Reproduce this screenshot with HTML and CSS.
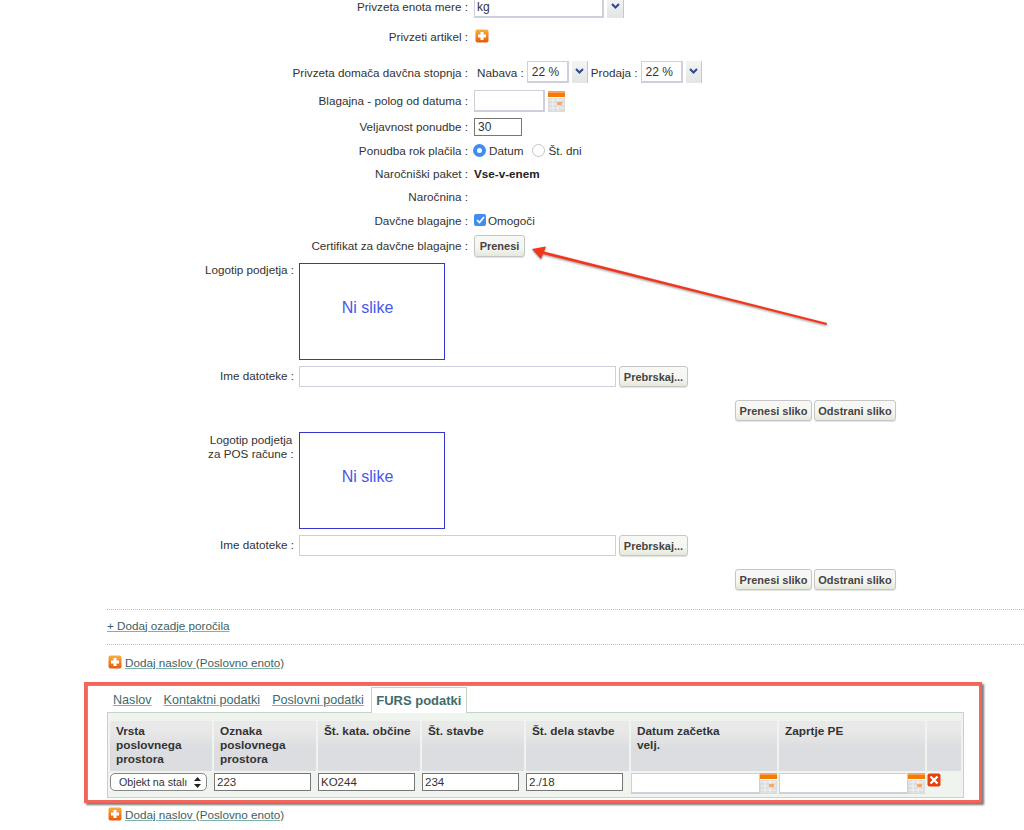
FILE: index.html
```html
<!DOCTYPE html>
<html lang="en">
<head>
    <meta charset="UTF-8">
    <title>Nastavitve podjetja</title>
    <link rel="stylesheet" href="styles.css">
</head>
<body>

<svg width="0" height="0" class="icon-defs">
    <defs>
        <linearGradient id="orange-fill" x1="0" y1="0" x2="0" y2="1">
            <stop offset="0" stop-color="#fbb03b"/>
            <stop offset="1" stop-color="#e8590c"/>
        </linearGradient>
        <symbol id="icon-add" viewBox="0 0 14 14">
            <rect x="0.5" y="0.5" width="13" height="13" rx="2" fill="url(#orange-fill)"/>
            <path d="M5.5 3h3v2.5H11v3H8.500V11h-3V8.500H3v-3h2.500z" fill="#fff"/>
        </symbol>
        <symbol id="icon-cal" viewBox="0 0 17 21" preserveAspectRatio="none">
            <rect width="17" height="21" fill="#dcdcdc"/>
            <rect width="17" height="2" fill="#f7a35c"/>
            <rect y="2" width="17" height="4" fill="#f57c00"/>
            <rect y="6" width="17" height="1" fill="#fff"/>
            <path d="M1 9h15M1 13h15M1 17h15M5 7v13M10 7v13" stroke="#f3f3f3" stroke-width="1"/>
            <rect x="9" y="11" width="5" height="3" fill="#f8a765"/>
        </symbol>
    </defs>
</svg>

<div id="company-form">
    <div class="row row-first">
        <label class="row-label">Privzeta enota mere :</label>
        <div class="row-value">
            <input type="text" class="field field-unit" value="kg">
            <span class="drop-btn"><svg width="9" height="6" viewBox="0 0 9 6"><path d="M1 1l3.500 3.500L8 1" fill="none" stroke="#2b4a8b" stroke-width="2"/></svg></span>
        </div>
    </div>
    <div class="row row-article">
        <label class="row-label label-up">Privzeti artikel :</label>
        <div class="row-value"><svg class="add-icon add-icon-raised"><use href="#icon-add"/></svg></div>
    </div>
    <div class="row row-tax">
        <label class="row-label">Privzeta domača davčna stopnja :</label>
        <div class="row-value">
            <span class="tax-label">Nabava :</span>
            <input type="text" class="field field-tax" value="22 %">
            <span class="drop-btn"><svg width="9" height="6" viewBox="0 0 9 6"><path d="M1 1l3.500 3.500L8 1" fill="none" stroke="#2b4a8b" stroke-width="2"/></svg></span>
            <span class="tax-label tax-label-second">Prodaja :</span>
            <input type="text" class="field field-tax" value="22 %">
            <span class="drop-btn"><svg width="9" height="6" viewBox="0 0 9 6"><path d="M1 1l3.500 3.500L8 1" fill="none" stroke="#2b4a8b" stroke-width="2"/></svg></span>
        </div>
    </div>
    <div class="row row-cash">
        <label class="row-label label-up">Blagajna - polog od datuma :</label>
        <div class="row-value">
            <input type="text" class="field field-date">
            <svg class="cal-icon"><use href="#icon-cal"/></svg>
        </div>
    </div>
    <div class="row row-valid">
        <label class="row-label">Veljavnost ponudbe :</label>
        <div class="row-value"><input type="text" class="field field-days" value="30"></div>
    </div>
    <div class="row">
        <label class="row-label">Ponudba rok plačila :</label>
        <div class="row-value">
            <span class="radio radio-on"></span><span class="opt-text">Datum</span>
            <span class="radio"></span><span class="opt-text">Št. dni</span>
        </div>
    </div>
    <div class="row row-up">
        <label class="row-label">Naročniški paket :</label>
        <div class="row-value"><b class="package">Vse-v-enem</b></div>
    </div>
    <div class="row row-up">
        <label class="row-label">Naročnina :</label>
        <div class="row-value"></div>
    </div>
    <div class="row row-up">
        <label class="row-label">Davčne blagajne :</label>
        <div class="row-value">
            <span class="check"><svg width="9" height="8" viewBox="0 0 9 8"><path d="M1 4l2.500 2.500L8 1" fill="none" stroke="#fff" stroke-width="1.6"/></svg></span>
            <span class="opt-text">Omogoči</span>
        </div>
    </div>
    <div class="row row-cert">
        <label class="row-label label-up">Certifikat za davčne blagajne :</label>
        <div class="row-value"><button class="btn btn-upload">Prenesi</button></div>
    </div>

    <div class="logo-row">
        <label class="logo-label">Logotip podjetja :</label>
        <div class="logo-box">Ni slike</div>
    </div>
    <div class="file-row">
        <label class="logo-label label-up">Ime datoteke :</label>
        <input type="text" class="field field-file">
        <button class="btn btn-browse">Prebrskaj...</button>
    </div>
    <div class="logo-actions">
        <button class="btn btn-send">Prenesi sliko</button>
        <button class="btn btn-remove">Odstrani sliko</button>
    </div>

    <div class="logo-row logo-row-pos">
        <label class="logo-label logo-label-center">Logotip podjetja<br>za POS račune :</label>
        <div class="logo-box">Ni slike</div>
    </div>
    <div class="file-row">
        <label class="logo-label label-up">Ime datoteke :</label>
        <input type="text" class="field field-file">
        <button class="btn btn-browse">Prebrskaj...</button>
    </div>
    <div class="logo-actions">
        <button class="btn btn-send">Prenesi sliko</button>
        <button class="btn btn-remove">Odstrani sliko</button>
    </div>
</div>

<div id="report-bg">
    <a href="#" class="link">+ Dodaj ozadje poročila</a>
</div>

<div class="add-address">
    <svg class="add-icon"><use href="#icon-add"/></svg>
    <a href="#" class="link">Dodaj naslov (Poslovno enoto)</a>
</div>

<!-- Highlighted address card -->
<div id="address-card">
    <div class="tabs">
        <a href="#" class="tab">Naslov</a>
        <a href="#" class="tab">Kontaktni podatki</a>
        <a href="#" class="tab">Poslovni podatki</a>
        <span class="tab-active">FURS podatki</span>
    </div>
    <div class="tab-panel">
        <table id="furs-table">
            <thead>
                <tr>
                    <th class="col-std">Vrsta poslovnega prostora</th>
                    <th class="col-std">Oznaka poslovnega prostora</th>
                    <th class="col-std">Št. kata. občine</th>
                    <th class="col-std">Št. stavbe</th>
                    <th class="col-wide">Št. dela stavbe</th>
                    <th class="col-date">Datum začetka<br>velj.</th>
                    <th class="col-date2">Zaprtje PE</th>
                    <th class="col-del"></th>
                </tr>
            </thead>
            <tbody>
                <tr>
                    <td><span class="pill-select">Objekt na stalı <svg width="7" height="11" viewBox="0 0 7 11"><path d="M3.500 0L7 4H0zM3.500 11L0 7h7z" fill="#222"/></svg></span></td>
                    <td><input type="text" class="cell-input" value="223"></td>
                    <td><input type="text" class="cell-input" value="KO244"></td>
                    <td><input type="text" class="cell-input" value="234"></td>
                    <td><input type="text" class="cell-input" value="2./18"></td>
                    <td><div class="date-cell"><input type="text" class="cell-date"><svg class="cal-icon-small"><use href="#icon-cal"/></svg></div></td>
                    <td><div class="date-cell"><input type="text" class="cell-date"><svg class="cal-icon-small"><use href="#icon-cal"/></svg></div></td>
                    <td>
                        <svg class="del-icon" viewBox="0 0 14 14">
                            <rect x="0.5" y="0.5" width="13" height="13" rx="2" fill="#ea3d0c"/>
                            <path d="M3.500 3.500l7 7M10.500 3.500l-7 7" stroke="#fff" stroke-width="2.400"/>
                        </svg>
                    </td>
                </tr>
            </tbody>
        </table>
    </div>
</div>

<div class="add-address add-address-bottom">
    <svg class="add-icon"><use href="#icon-add"/></svg>
    <a href="#" class="link">Dodaj naslov (Poslovno enoto)</a>
</div>

<!-- Annotation arrow over the form -->
<svg id="arrow" width="310" height="90" viewBox="0 0 310 90">
    <path d="M4 5L18 2.500L16 7.500L299 79L298.500 81L15 10L13 15z" fill="#f5351a"/>
</svg>

</body>
</html>
```

FILE: styles.css
```css
/* Page */
body {
    font-family: 'Liberation Sans', Arial, sans-serif;
    font-size: 11.7px;
    color: #333;
    background-color: #fff;
    margin: 0;
    width: 1024px;
    height: 830px;
    overflow: hidden;
    position: relative;
}

.icon-defs {
    position: absolute;
}

/* Form rows */
.row {
    display: flex;
    align-items: center;
    height: 23.5px;
}

.row-up {
    box-sizing: border-box;
    padding-bottom: 2px;
}

.label-up {
    padding-bottom: 2px;
}

.row-first {
    height: 18px;
    align-items: flex-end;
    overflow: hidden;
}

.row-first .row-label {
    padding-bottom: 5px;
}

.row-article {
    height: 38px;
}

.row-tax {
    height: 32px;
}

.row-cash {
    height: 26px;
}

.row-valid {
    height: 25px;
}

.row-cert {
    height: 26px;
}

.row-label {
    width: 468px;
    text-align: right;
    flex-shrink: 0;
}

.row-value {
    display: flex;
    align-items: center;
    margin-left: 5px;
}

.field {
    box-sizing: border-box;
    font-family: inherit;
    font-size: 12px;
    color: #333;
    background-color: #fff;
    border: 1px solid #cfcfdc;
    border-width: 1px 2px 2px 1px;
    padding: 0 3px;
    margin: 0;
    outline: none;
}

.field-unit {
    width: 130px;
    height: 22px;
    margin-left: 1px;
    padding-left: 2px;
}

.field-tax {
    width: 42px;
    height: 22px;
    padding-left: 4px;
}

.field-date {
    width: 71px;
    height: 22px;
    margin-left: 1px;
}

.field-days {
    width: 48px;
    height: 18px;
    margin-left: 1px;
    border: 1px solid #777;
}

.field-file {
    width: 317px;
    height: 21px;
    border-width: 1px;
}

.drop-btn {
    box-sizing: border-box;
    width: 16px;
    height: 22px;
    margin-left: 3px;
    display: flex;
    align-items: center;
    justify-content: center;
    padding-bottom: 3px;
    background: linear-gradient(#f4f4f4, #e3e6e6);
    border-right: 1px solid #a8dcb4;
}

.row-first .drop-btn {
    width: 17px;
}

.tax-label {
    margin-right: 3px;
    margin-left: 4px;
}

.tax-label-second {
    margin-left: 3px;
    margin-right: 3px;
}

.cal-icon {
    width: 17px;
    height: 21px;
    margin-left: 3px;
}

.radio {
    box-sizing: border-box;
    width: 13px;
    height: 13px;
    border-radius: 50%;
    border: 1px solid #c4c4c4;
    background-color: #fff;
}

.radio-on {
    border: 4px solid #3f8df2;
}

.opt-text {
    margin-left: 3px;
    margin-right: 9px;
}

.package {
    margin-left: 1px;
    color: #222;
}

.check {
    width: 12px;
    height: 12px;
    margin-left: 1px;
    border-radius: 2px;
    background-color: #3f8df2;
    display: flex;
    align-items: center;
    justify-content: center;
}

.check + .opt-text {
    margin-left: 2px;
}

.add-icon {
    width: 14px;
    height: 14px;
    flex-shrink: 0;
}

.add-icon-raised {
    margin: 0 0 3px 2px;
}

/* Buttons */
.btn {
    box-sizing: border-box;
    font-family: inherit;
    font-size: 11px;
    font-weight: bold;
    color: #444;
    height: 21px;
    padding: 0;
    border: 1px solid #c6c6c6;
    border-radius: 3px;
    background: linear-gradient(#f8f8f6 0%, #f5f5f2 60%, #e4e9d9 100%);
    box-shadow: 0 1px 1px rgba(0, 0, 0, 0.12);
}

.btn-upload {
    width: 51px;
    height: 22px;
    margin-left: 1px;
}

.btn-browse {
    width: 69px;
    margin-left: 3px;
}

.btn-send {
    width: 77px;
}

.btn-remove {
    width: 82px;
    margin-left: 2px;
}

/* Logo blocks */
.logo-row {
    display: flex;
    margin-top: 4px;
}

.logo-row-pos {
    margin-top: 0;
}

.logo-label {
    width: 294px;
    flex-shrink: 0;
    text-align: right;
    margin-right: 5px;
}

.logo-label-center {
    text-align: center;
    width: 88px;
    margin-left: 207px;
    margin-right: 4px;
    padding-top: 1px;
    line-height: 14px;
}

.logo-box {
    box-sizing: border-box;
    width: 146px;
    height: 97px;
    padding: 0 9px 8px 0;
    border: 1px solid #3535d0;
    display: flex;
    align-items: center;
    justify-content: center;
    font-size: 16px;
    color: #4458ee;
}

.file-row {
    display: flex;
    align-items: center;
    margin-top: 6px;
}

.logo-actions {
    display: flex;
    padding-left: 735px;
    margin-top: 13px;
    height: 32px;
}

/* Report background and address links */
#report-bg {
    box-sizing: content-box;
    margin: 8px 0 0 107px;
    border-top: 1px dotted #b5c4b5;
    border-bottom: 1px dotted #b5c4b5;
    height: 30px;
    padding-bottom: 4px;
    display: flex;
    align-items: center;
}

.link {
    color: #3d5f5f;
    text-decoration: underline;
    text-decoration-color: #7fb0ac;
}

.add-address {
    display: flex;
    align-items: center;
    margin: 10px 0 0 108px;
    height: 14px;
}

.add-address .link {
    margin-left: 3px;
}

.add-address-bottom {
    margin-top: 4px;
}

/* Address card */
#address-card {
    box-sizing: border-box;
    width: 898px;
    height: 121px;
    margin: 13px 0 0 84px;
    padding: 1px 18px 0 20px;
    background-color: #fff;
    border: 3px solid #f0665a;
    box-shadow: 2px 2px 2px #777, inset 1px 1px 0 #999;
}

.tabs {
    display: flex;
    align-items: flex-end;
    height: 26px;
    padding-left: 6px;
}

.tab {
    color: #3d6a6a;
    font-size: 12.6px;
    margin-right: 12px;
    padding-bottom: 5px;
    text-decoration: underline;
    text-decoration-color: #7fb0ac;
}

.tab-active {
    box-sizing: border-box;
    height: 26px;
    width: 96px;
    margin: 0 0 -1px -5px;
    text-align: center;
    line-height: 26px;
    font-size: 13px;
    font-weight: bold;
    color: #3e6b6b;
    background-color: #fff;
    border: 1px solid #c5d5c5;
    border-bottom: none;
    position: relative;
}

.tab-panel {
    box-sizing: border-box;
    width: 857px;
    height: 86px;
    border: 1px solid #c5d5c5;
    background-color: #eff4ef;
    padding-top: 6px;
}

#furs-table {
    table-layout: fixed;
    border-collapse: separate;
    border-spacing: 2px;
    width: 855px;
}

#furs-table th {
    box-sizing: border-box;
    height: 50px;
    padding: 3px 6px 0;
    vertical-align: top;
    text-align: left;
    font-size: 11.8px;
    line-height: 14px;
    color: #333;
    background: linear-gradient(#e9e9e9 0%, #e8e8e8 20%, #dcdde0 55%, #dcdde0 100%);
}

.col-std {
    width: 102px;
}

.col-wide {
    width: 103px;
}

.col-date {
    width: 146px;
}

.col-date2 {
    width: 146px;
}

.col-del {
    width: 34px;
}

#furs-table td {
    padding: 0;
    height: 22px;
    vertical-align: top;
}

.cell-input {
    box-sizing: border-box;
    display: block;
    width: 97px;
    height: 18px;
    padding: 0 2px;
    margin: 0;
    font-family: inherit;
    font-size: 11.5px;
    color: #333;
    border: 1px solid #777;
    outline: none;
    background-color: #fff;
}

.pill-select {
    box-sizing: border-box;
    width: 97px;
    height: 18px;
    padding: 0 5px 0 8px;
    display: flex;
    align-items: center;
    justify-content: space-between;
    font-size: 10.7px;
    color: #333;
    white-space: nowrap;
    background-color: #fff;
    border: 1px solid #888;
    border-radius: 5px;
}

.date-cell {
    display: flex;
}

.cell-date {
    box-sizing: border-box;
    width: 129px;
    height: 21px;
    margin: 0;
    border: 1px solid #cfcfdc;
    border-width: 1px 1px 2px 1px;
    outline: none;
    background-color: #fff;
}

.cal-icon-small {
    width: 17px;
    height: 21px;
}

.del-icon {
    display: block;
    width: 14px;
    height: 14px;
}

/* Annotation arrow */
#arrow {
    position: absolute;
    left: 528px;
    top: 244px;
    filter: drop-shadow(0 1.5px 1px rgba(0, 0, 0, 0.45));
}
```
